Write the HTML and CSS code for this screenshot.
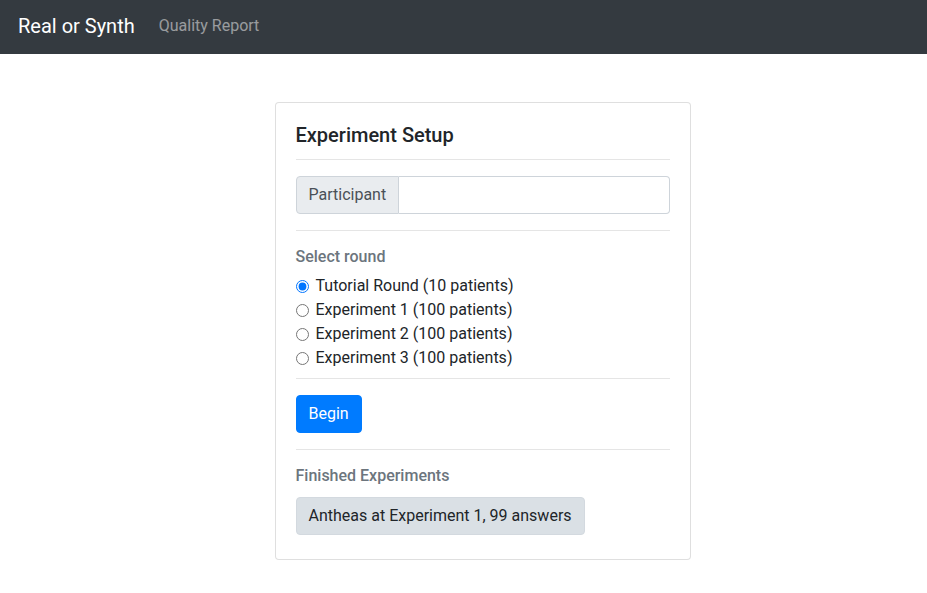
FILE: index.html
```html
<!DOCTYPE html>
<html lang="en">
<head>
<meta charset="utf-8">
<title>Real or Synth</title>
<link rel="stylesheet" href="styles.css">
</head>
<body>
<nav class="navbar">
  <a class="brand" href="#">Real or Synth</a>
  <a class="nav-link" href="#">Quality Report</a>
</nav>
<main class="page">
  <section class="card">
    <h5 class="card-title">Experiment Setup</h5>
    <hr class="sep sep-title">
    <div class="input-group">
      <span class="input-prepend">Participant</span>
      <input class="input" type="text">
    </div>
    <hr class="sep">
    <h6 class="label">Select round</h6>
    <div class="radios">
      <label class="radio"><input type="radio" name="round" checked><span>Tutorial Round (10 patients)</span></label>
      <label class="radio"><input type="radio" name="round"><span>Experiment 1 (100 patients)</span></label>
      <label class="radio"><input type="radio" name="round"><span>Experiment 2 (100 patients)</span></label>
      <label class="radio"><input type="radio" name="round"><span>Experiment 3 (100 patients)</span></label>
    </div>
    <hr class="sep sep-radios">
    <div class="actions"><button class="btn btn-primary">Begin</button></div>
    <hr class="sep">
    <h6 class="label">Finished Experiments</h6>
    <div class="finished"><button class="btn btn-light">Antheas at Experiment 1, 99 answers</button></div>
  </section>
</main>
</body>
</html>
```
FILE: styles.css
```css
* { box-sizing: border-box; }
html, body { margin: 0; padding: 0; }
body {
  font-family: Roboto, "Liberation Sans", Arial, sans-serif;
  font-size: 16px;
  line-height: 1.5;
  color: #212529;
  background: #fff;
}
.navbar {
  height: 54px;
  background: #343a40;
  display: flex;
  align-items: center;
  padding: 0 18px;
}
.brand {
  color: #fff;
  font-size: 20px;
  text-decoration: none;
  margin-right: 24px;
  line-height: 30px;
  padding-bottom: 2px;
}
.nav-link {
  color: rgba(255,255,255,.5);
  text-decoration: none;
  font-size: 16px;
  padding: 0 0 2px;
}
.page {
  display: flex;
  justify-content: center;
  padding: 48px 0 0 38px;
}
.card {
  width: 416px;
  border: 1px solid rgba(0,0,0,.125);
  border-radius: 4px;
  padding: 20px 20px 20px;
  background: #fff;
}
.card-title {
  margin: 0 0 12px;
  font-size: 20px;
  font-weight: 500;
  line-height: 1.2;
}
.sep {
  border: 0;
  border-top: 1px solid rgba(0,0,0,.1);
  margin: 16px 0;
}
.sep-title { margin-top: 0; }
.sep-radios { margin-top: 8px; }
.input-group {
  display: flex;
  height: 38px;
}
.input-prepend {
  display: flex;
  align-items: center;
  padding: 0 12px;
  background: #e9ecef;
  color: #495057;
  border: 1px solid #ced4da;
  border-radius: 4px 0 0 4px;
}
.input {
  flex: 1;
  min-width: 0;
  border: 1px solid #ced4da;
  border-left: 0;
  border-radius: 0 4px 4px 0;
  font: inherit;
  padding: 0 12px;
  color: #495057;
  outline: none;
}
.label {
  margin: 0 0 8px;
  font-size: 16px;
  font-weight: 500;
  line-height: 1.2;
  color: #6c757d;
}
.radios {
  display: flex;
  flex-direction: column;
}
.radio {
  display: flex;
  align-items: center;
  height: 24px;
}
.radio input {
  margin: 0 7px 0 0;
  width: 13px;
  height: 13px;
}
.actions, .finished { display: flex; }
.finished { padding: 4px 0; }
.btn {
  font: inherit;
  line-height: 1.5;
  padding: 6px 12px;
  border-radius: 4px;
  border: 1px solid transparent;
  cursor: pointer;
}
.btn-primary {
  background: #007bff;
  border-color: #007bff;
  color: #fff;
}
.btn-light {
  background: #dae0e5;
  border-color: #d3d9df;
  color: #212529;
}
```
